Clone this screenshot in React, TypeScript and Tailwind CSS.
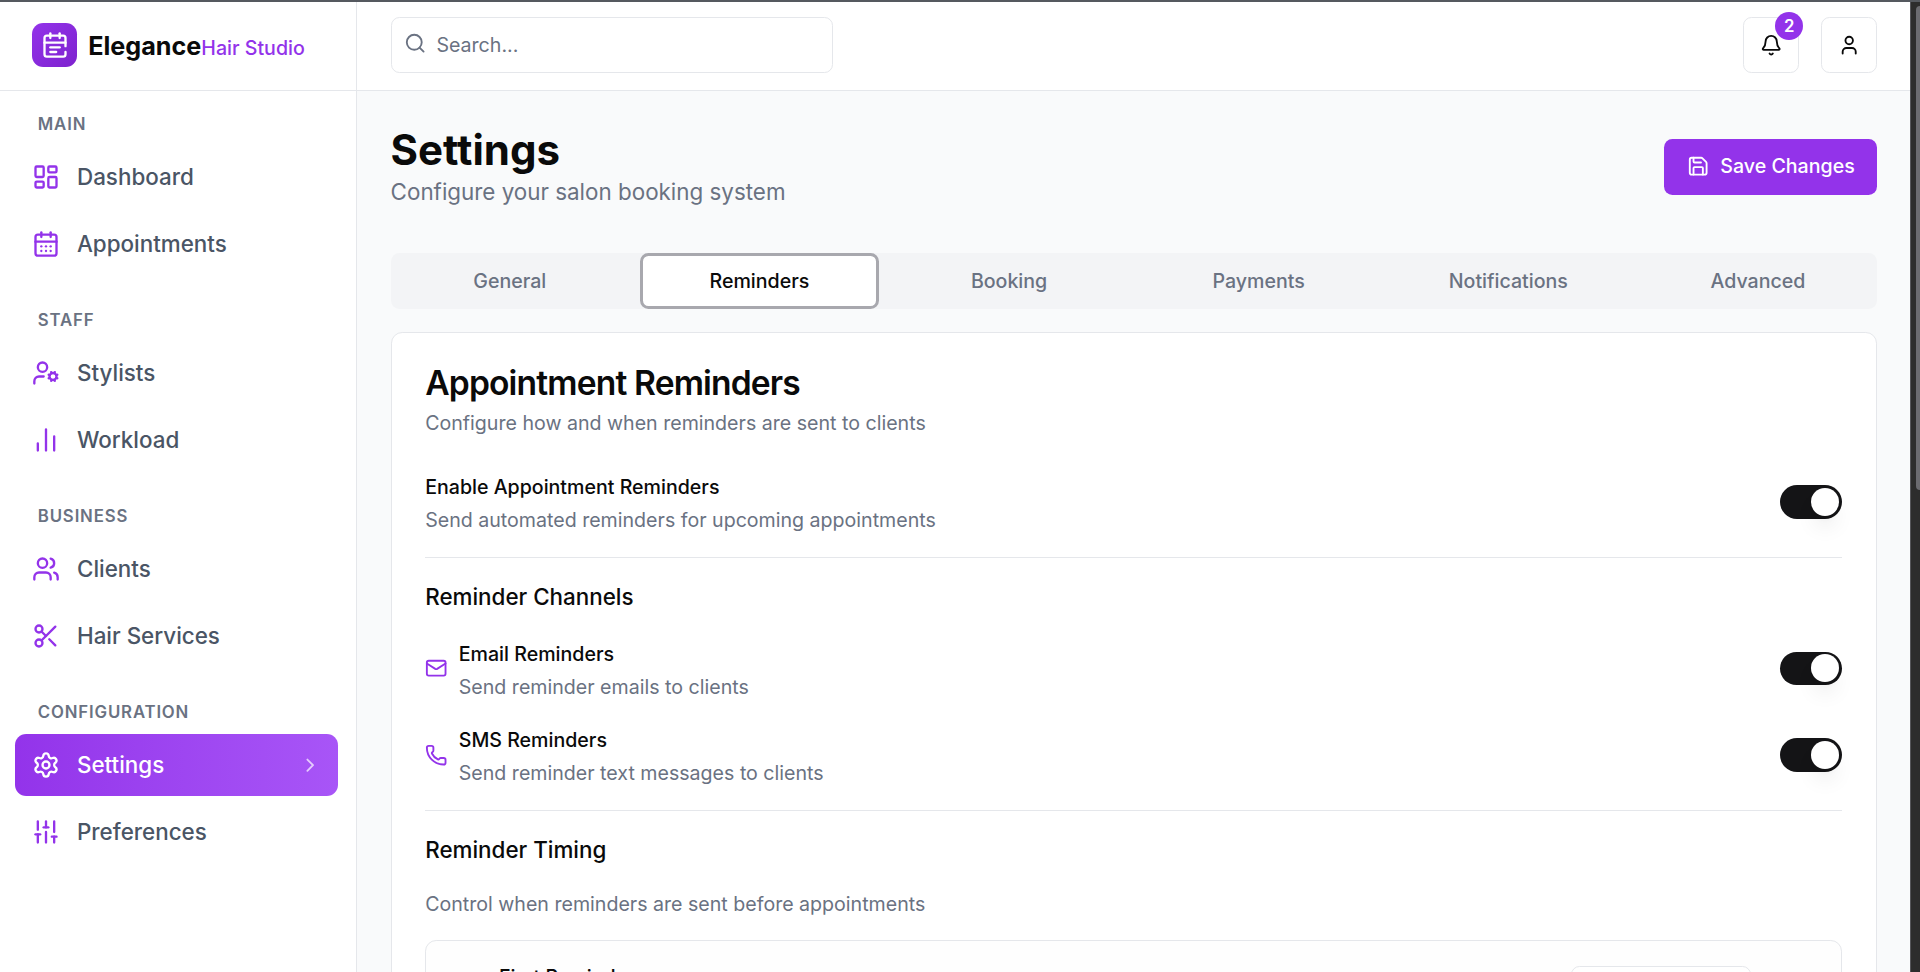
import {
  Bell, CalendarDays, ChartNoAxesColumn, ChevronRight, LayoutDashboard, Mail, Phone, Save, Scissors,
  Search, Settings, SlidersVertical, User, UserCog, Users,
} from "lucide-react";
import type { ComponentType } from "react";

type IconT = ComponentType<{ className?: string }>;

const groups: { label: string; items: { name: string; icon: IconT; active?: boolean }[] }[] = [
  { label: "Main", items: [{ name: "Dashboard", icon: LayoutDashboard }, { name: "Appointments", icon: CalendarDays }] },
  { label: "Staff", items: [{ name: "Stylists", icon: UserCog }, { name: "Workload", icon: ChartNoAxesColumn }] },
  { label: "Business", items: [{ name: "Clients", icon: Users }, { name: "Hair Services", icon: Scissors }] },
  { label: "Configuration", items: [{ name: "Settings", icon: Settings, active: true }, { name: "Preferences", icon: SlidersVertical }] },
];

const tabs = ["General", "Reminders", "Booking", "Payments", "Notifications", "Advanced"];

function LogoMark() {
  return (
    <svg viewBox="0 0 24 24" fill="none" stroke="currentColor" strokeWidth="2" strokeLinecap="round" strokeLinejoin="round" className="h-5 w-5">
      <path d="M8 2v4" />
      <path d="M16 2v4" />
      <path d="M3 10h18" />
      <path d="M21 13V6a2 2 0 0 0-2-2H5a2 2 0 0 0-2 2v14a2 2 0 0 0 2 2h14a2 2 0 0 0 2-2v-2" />
      <path d="M16 14H8" />
      <path d="M13 18H8" />
    </svg>
  );
}

function Toggle() {
  return (
    <div className="flex h-6 w-11 shrink-0 items-center rounded-full bg-[#141416] p-0.5">
      <div className="h-5 w-5 translate-x-5 rounded-full bg-white shadow-lg" />
    </div>
  );
}

function Row({ title, desc, icon: Icon, className = "" }: { title: string; desc: string; icon?: IconT; className?: string }) {
  return (
    <div className={`flex h-11 items-center justify-between ${className}`}>
      <div className="flex items-center gap-2">
        {Icon && <Icon className="h-4 w-4 text-[#9333ea]" />}
        <div className="pt-1">
          <div className="text-sm font-medium text-[#0a0a0a]">{title}</div>
          <div className="mt-[3.6px] text-sm text-gray-500">{desc}</div>
        </div>
      </div>
      <Toggle />
    </div>
  );
}

function Sidebar() {
  return (
    <aside className="flex h-full w-[255px] shrink-0 flex-col border-r border-gray-200 bg-white">
      <div className="flex h-[65px] shrink-0 items-center gap-2 border-b border-gray-200 pl-[23px]">
        <div className="flex h-8 w-8 items-center justify-center rounded-lg bg-gradient-to-br from-[#9333ea] to-[#7e22ce] text-white">
          <LogoMark />
        </div>
        <div className="mt-[3px] flex items-baseline">
          <span className="text-lg font-bold text-[#0a0a0a]">Elegance</span>
          <span className="text-sm font-medium text-[#9333ea]">Hair Studio</span>
        </div>
      </div>
      <nav className="flex flex-col gap-[24.5px] pt-4 pr-[13px] pl-[11px]">
        {groups.map((g) => (
          <div key={g.label}>
            <div className="mb-[7.5px] px-4 text-xs font-semibold tracking-wider text-gray-500 uppercase">{g.label}</div>
            <div className="flex flex-col gap-1">
              {g.items.map((it) => (
                <div
                  key={it.name}
                  className={
                    it.active
                      ? "flex items-center gap-3 rounded-lg bg-gradient-to-r from-[#9333ea] to-[#a855f7] px-3 py-2.5 font-medium text-white"
                      : "flex items-center gap-3 rounded-lg px-3 py-2.5 font-medium text-gray-600"
                  }
                >
                  <it.icon className={it.active ? "h-5 w-5 text-white" : "h-5 w-5 text-[#9333ea]"} />
                  <span className="flex-1">{it.name}</span>
                  {it.active && <ChevronRight className="h-4 w-4 text-white/70" />}
                </div>
              ))}
            </div>
          </div>
        ))}
      </nav>
    </aside>
  );
}

function Header() {
  return (
    <header className="flex h-[65px] shrink-0 items-center justify-between border-b border-gray-200 bg-white pr-[23.5px] pl-6">
      <div className="flex h-10 w-[316px] items-center gap-[7px] rounded-md border border-gray-200 bg-white pl-[9px] text-sm text-gray-500">
        <Search className="mb-[3px] h-4 w-4" />
        <span className="mt-[2px]">Search...</span>
      </div>
      <div className="flex items-center gap-4">
        <div className="relative flex h-10 w-10 items-center justify-center rounded-md border border-gray-200 bg-white text-[#0a0a0a]">
          <Bell className="h-4 w-4" />
          <span className="absolute -top-1 -right-1 flex h-5 w-5 items-center justify-center rounded-full bg-[#9333ea] text-xs font-semibold text-white">2</span>
        </div>
        <div className="flex h-10 w-10 items-center justify-center rounded-md border border-gray-200 bg-white text-[#0a0a0a]">
          <User className="h-4 w-4" />
        </div>
      </div>
    </header>
  );
}

function Content() {
  return (
    <main className="min-h-0 flex-1 overflow-hidden bg-[#f9fafb] pt-6 pr-[23.5px] pl-6">
      <div className="flex items-center justify-between">
        <div>
          <h1 className="text-3xl font-bold text-[#0a0a0a]">Settings</h1>
          <p className="text-gray-500">Configure your salon booking system</p>
        </div>
        <button className="flex h-10 items-center gap-2 rounded-md bg-[#9333ea] px-4 text-sm font-medium text-white">
          <Save className="h-4 w-4" />
          <span className="mt-[1px]">Save Changes</span>
        </button>
      </div>

      <div className="mt-8 flex h-10 gap-2 rounded-md bg-[#f3f4f6]">
        {tabs.map((t) => (
          <div
            key={t}
            className={
              t === "Reminders"
                ? "flex flex-1 items-center justify-center rounded-md border-[2.2px] border-[#a8a8ae] bg-white pt-[1px] text-sm font-medium text-[#0a0a0a]"
                : "flex flex-1 items-center justify-center border-[2.2px] border-transparent pt-[1px] text-sm font-medium text-gray-500"
            }
          >
            {t}
          </div>
        ))}
      </div>

      <section className="mt-4 rounded-lg border border-gray-200 bg-white pt-6 pr-[24.5px] pl-6">
        <h2 className="text-2xl leading-none font-semibold tracking-tight text-[#0a0a0a]">Appointment Reminders</h2>
        <p className="mt-[7px] text-sm text-gray-500">Configure how and when reminders are sent to clients</p>

        <Row className="mt-6" title="Enable Appointment Reminders" desc="Send automated reminders for upcoming appointments" />
        <div className="mt-[17px] border-t border-gray-200" />

        <h3 className="mt-4 font-medium text-[#0a0a0a]">Reminder Channels</h3>
        <Row className="mt-[17px]" icon={Mail} title="Email Reminders" desc="Send reminder emails to clients" />
        <Row className="mt-[18px]" icon={Phone} title="SMS Reminders" desc="Send reminder text messages to clients" />
        <div className="mt-[17px] border-t border-gray-200" />

        <h3 className="mt-4 font-medium text-[#0a0a0a]">Reminder Timing</h3>
        <p className="mt-[17.5px] text-sm text-gray-500">Control when reminders are sent before appointments</p>

        <div className="mt-[15px] flex h-28 items-start justify-between rounded-lg border border-gray-200 bg-[#fefefe] pt-4 pr-16 pl-[52px]">
          <div className="text-sm font-medium text-[#0a0a0a]">First Reminder</div>
          <div className="mt-0.5 h-10 w-[129px] rounded-md border border-gray-200 bg-white" />
        </div>
      </section>
    </main>
  );
}

export default function App() {
  return (
    <div className="relative flex h-screen w-screen overflow-hidden bg-white [font-family:Inter,sans-serif]">
      <div className="flex h-full min-w-0 flex-1 [zoom:1.4]">
        <Sidebar />
        <div className="flex h-full min-w-0 flex-1 flex-col">
          <Header />
          <Content />
        </div>
      </div>
      <div className="flex w-[10px] shrink-0 justify-end border-l border-[#56565a] bg-[#2d2d2d] pt-1.5">
        <div className="h-[484px] w-1 rounded-tl-sm rounded-bl-sm bg-[#6b6b70]" />
      </div>
      <div className="absolute inset-x-0 top-0 h-[2px] bg-[#55595f]" />
    </div>
  );
}
